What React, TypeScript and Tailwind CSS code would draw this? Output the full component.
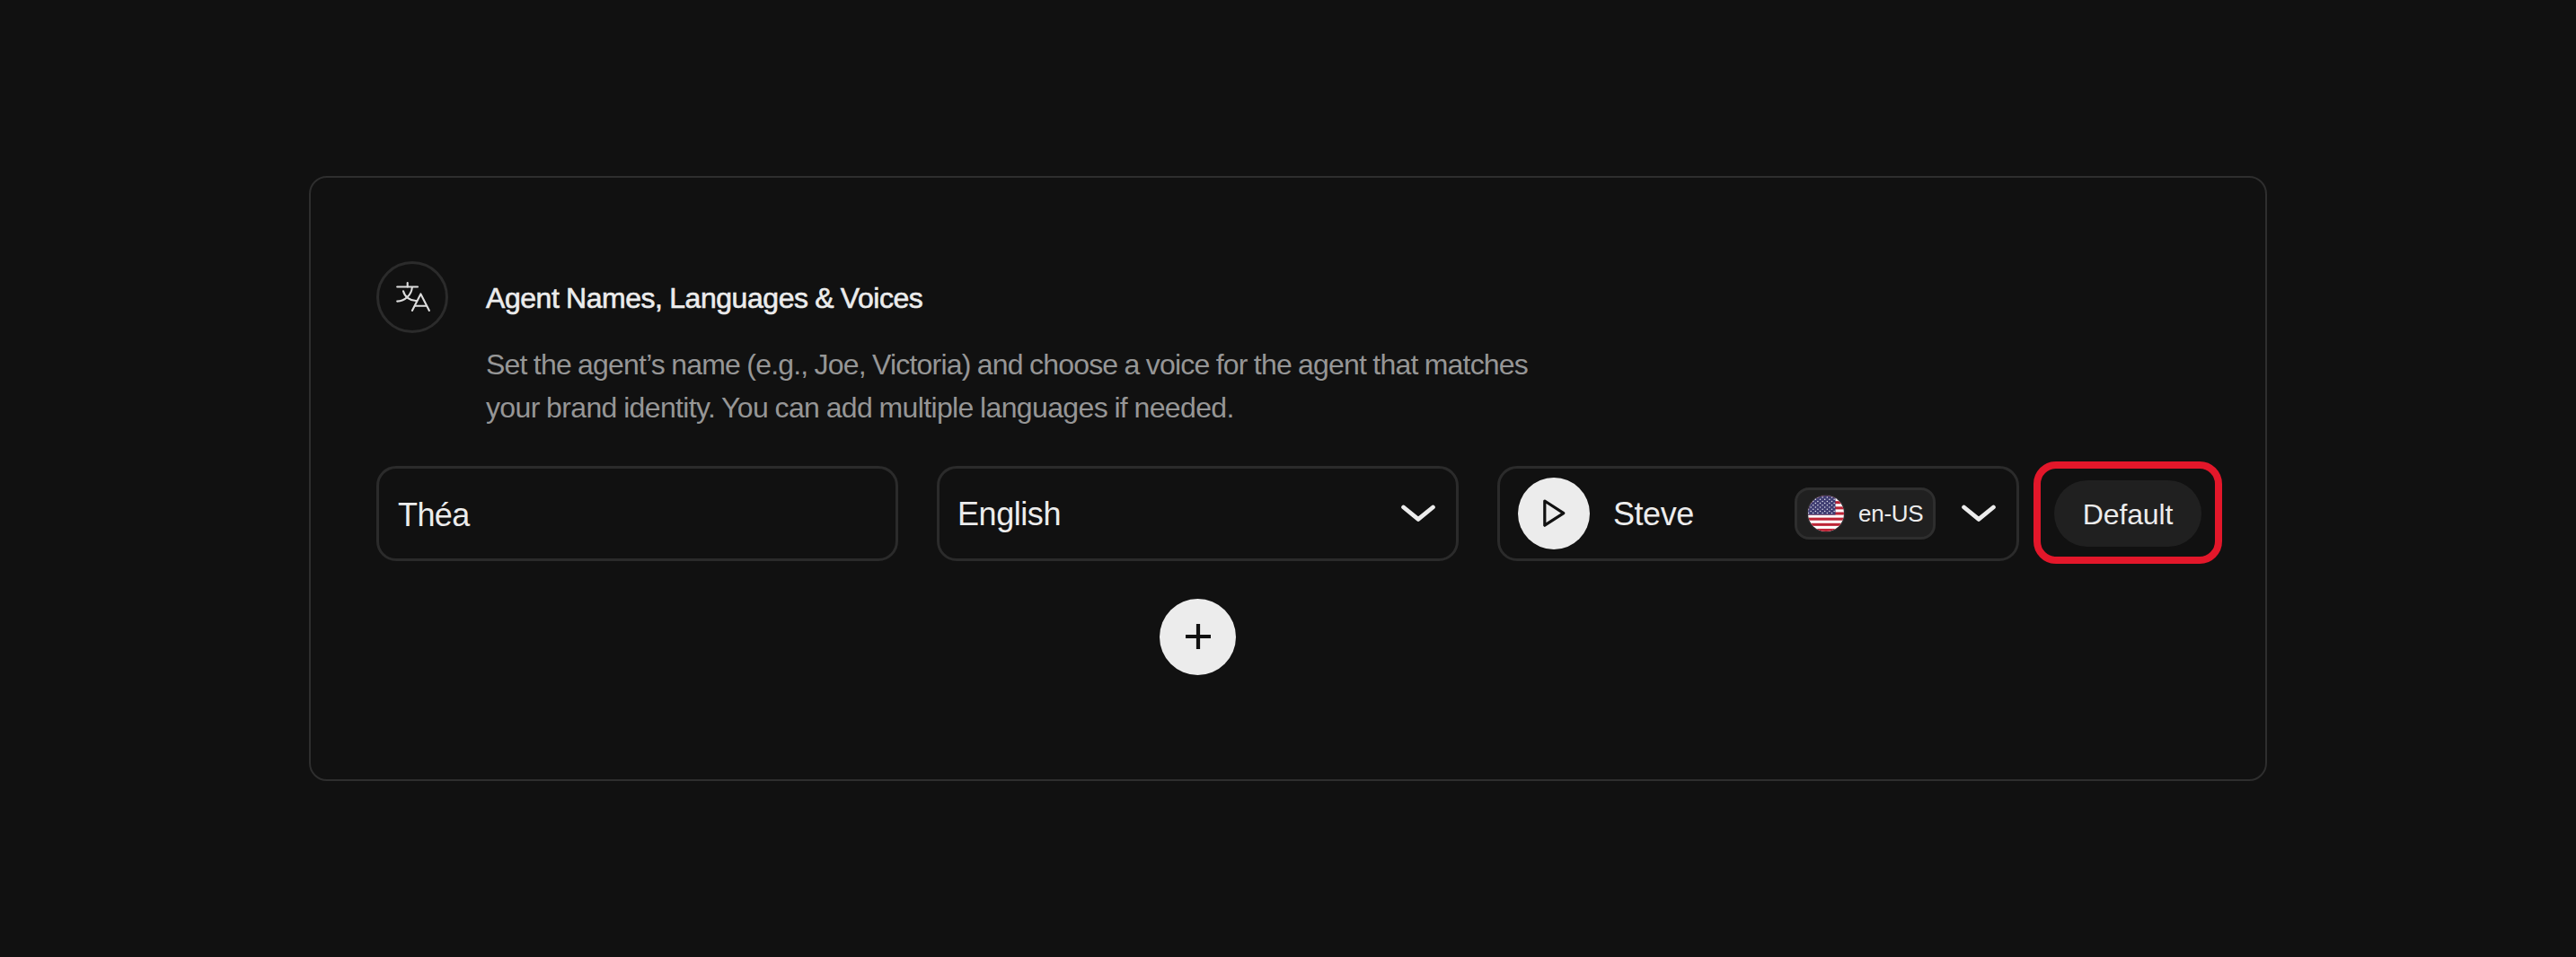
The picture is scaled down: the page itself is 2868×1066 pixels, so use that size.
import type { ReactNode } from "react";

function TranslateIcon() {
  return (
    <svg width="40" height="40" viewBox="0 0 40 40" fill="none" stroke="#dedede" strokeWidth="2.1" strokeLinecap="round">
      <path d="M3.2 8.5H26" />
      <path d="M14.7 4V8.5" />
      <path d="M19.8 9C19.4 16.5 12.5 24.6 3.2 24.6" />
      <path d="M10 13.2C11.6 19.6 17.6 24.4 25 24" />
      <path d="M19.9 34.9L29.4 16.4L38.9 34.9" strokeLinejoin="round" />
      <path d="M22.9 29.7H35.9" />
    </svg>
  );
}

function Chevron() {
  return (
    <svg className="shrink-0" width="38" height="20" viewBox="0 0 38 20" fill="none">
      <path d="M2.6 3L19 16.4L35.4 3" stroke="#ececec" strokeWidth="4.8" strokeLinecap="round" strokeLinejoin="round" />
    </svg>
  );
}

const STARS = Array.from({ length: 9 }, (_, r) =>
  Array.from({ length: 6 }, (_, c) => [0.5 + c * 5.2 + (r % 2 ? 2.6 : 0), 2 + r * 2.2]),
)
  .flat()
  .filter(([x]) => x < 29.5);

function UsFlag() {
  return (
    <svg className="shrink-0" width="44" height="44" viewBox="-2 -2 44 44">
      <defs>
        <clipPath id="flag-round">
          <circle cx="20" cy="20" r="20" />
        </clipPath>
      </defs>
      <circle cx="20" cy="20" r="21.5" fill="#2b2b2e" />
      <g clipPath="url(#flag-round)">
        <rect width="40" height="40" fill="#fff" />
        {[0, 2, 4, 6, 8, 10, 12].map((i) => (
          <rect key={i} y={(i * 40) / 13} width="40" height={40 / 13} fill="#bd2436" />
        ))}
        <rect width="30.5" height="21.5" fill="#3f3d72" />
        {STARS.map(([x, y], i) => (
          <circle key={i} cx={x} cy={y} r="0.75" fill="#e6e6f0" />
        ))}
      </g>
    </svg>
  );
}

function Field({ children }: { children: ReactNode }) {
  return (
    <div className="mt-[5px] flex h-[106px] w-[581px] shrink-0 items-center rounded-[22px] border-3 border-[#2b2b2b] pr-[23px] pl-5 text-[36px] leading-[48px] text-[#ececec]">
      {children}
    </div>
  );
}

export default function App() {
  return (
    <main className="flex h-[1066px] w-[2868px] justify-center bg-[#111111] pt-[196px] font-['Liberation_Sans',sans-serif]">
      <section className="h-[674px] w-[2180px] rounded-[20px] border-2 border-[#2e2e2e] pt-[93px] pl-[73px]">
        <header className="flex items-start gap-[42px]">
          <div className="flex size-20 shrink-0 items-center justify-center rounded-full border-3 border-[#2b2b2b]">
            <TranslateIcon />
          </div>
          <div className="mt-[17px] text-[32px] leading-[48px] whitespace-nowrap">
            <h2 className="tracking-[-0.46px] [word-spacing:-0.7px] text-[#ececec] [-webkit-text-stroke:0.6px_#ececec]">Agent Names, Languages &amp; Voices</h2>
            <p className="mt-[26px] text-[#969696]">
              <span className="block tracking-[-0.81px] [word-spacing:-0.85px]">
                Set the agent’s name (e.g., Joe, Victoria) and choose a voice for the agent that matches
              </span>
              <span className="block tracking-[-0.64px] [word-spacing:-0.85px]">your brand identity. You can add multiple languages if needed.</span>
            </p>
          </div>
        </header>

        <div className="mt-9 flex items-start">
          <div className="flex gap-[43px]">
            <Field>
              <span className="pt-[3px] pl-px tracking-[-0.6px]">Théa</span>
            </Field>
            <Field>
              <span className="flex-1 pt-0.5 tracking-[-0.44px]">English</span>
              <Chevron />
            </Field>
            <Field>
              <button className="flex size-20 shrink-0 items-center justify-center rounded-full bg-[#ececec]">
                <svg width="28" height="34" viewBox="0 0 28 34" fill="none">
                  <path d="M3.8 3L24.8 16.6L3.8 30.2Z" stroke="#111" strokeWidth="3.2" strokeLinejoin="round" />
                </svg>
              </button>
              <span className="ml-[26px] flex-1 pt-0.5 tracking-[-0.46px]">Steve</span>
              <span className="mr-[29px] flex h-[58px] w-[157px] items-center rounded-2xl border-3 border-[#2e2e2e] bg-[#202020] pl-[10px] text-[26px] leading-8">
                <UsFlag />
                <span className="ml-[14px] tracking-[-0.26px] whitespace-nowrap">en-US</span>
              </span>
              <Chevron />
            </Field>
          </div>
          <div className="ml-4 flex h-[114px] w-[210px] items-center justify-center rounded-[25px] border-8 border-[#e3172a]">
            <div className="mt-0.5 flex h-[74px] w-[164px] items-center justify-center rounded-full bg-[#202020] pt-px text-[32px] tracking-[-0.12px] text-[#ececec]">
              Default
            </div>
          </div>
        </div>

        <div className="mt-[39px] flex w-[1829px] justify-center">
          <button className="flex size-[85px] items-center justify-center rounded-full bg-[#ececec] pb-0.5">
            <svg width="28" height="28" viewBox="0 0 28 28" fill="none">
              <path d="M14 0V28M0 14H28" stroke="#111" strokeWidth="4.2" />
            </svg>
          </button>
        </div>
      </section>
    </main>
  );
}
